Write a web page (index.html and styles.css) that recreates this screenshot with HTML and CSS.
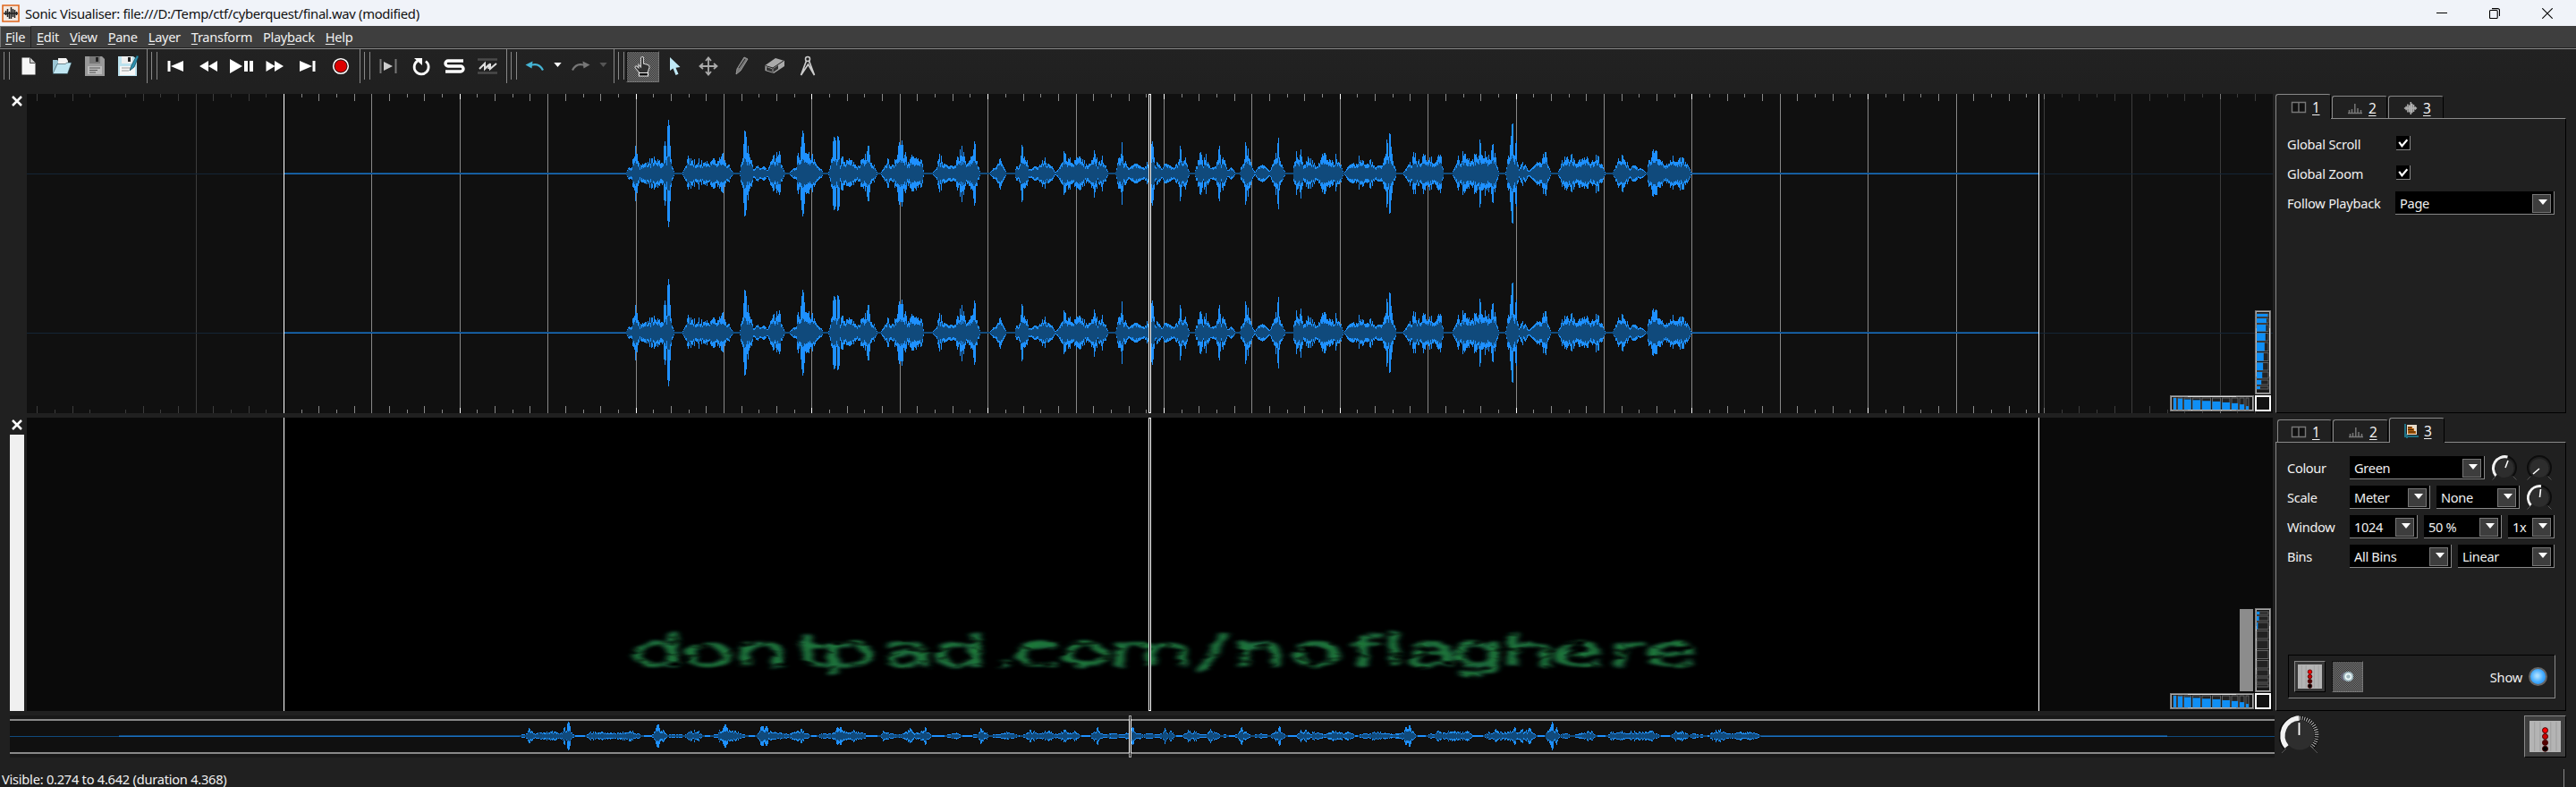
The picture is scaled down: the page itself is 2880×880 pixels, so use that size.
FILE: index.html
```html
<!DOCTYPE html>
<html lang="en">
<head>
<meta charset="utf-8">
<title>Sonic Visualiser</title>
<link rel="stylesheet" href="styles.css">
</head>
<body>
<svg class="defs" width="0" height="0">
  <defs>
    <symbol id="panes" viewBox="0 0 18 14"><path d="M1.5 1.5h15v11h-15zM9 1.5v11" fill="#111" stroke="#777" stroke-width="1.4"/></symbol>
    <symbol id="ruler" viewBox="0 0 18 14"><path d="M1 12.5h16M2.500 12v-3M5.500 12v-4M8.800 12V2M12 12V7M15.500 12V9" stroke="#777" stroke-width="1.5"/></symbol>
    <symbol id="wave" viewBox="0 0 18 16"><path d="M1 8h16M3.500 5.500v5M5.500 3v10M7.500 4v9M9.300 0v16M11 2v12M13 3.500v9M15 6v4" stroke="#b0b0b0" stroke-width="1.700"/></symbol>
    <symbol id="x" viewBox="0 0 12 12"><path d="M1 1l10 10M11 1L1 11" stroke="#fff" stroke-width="2.500"/></symbol>
    <symbol id="fader" viewBox="0 0 28 28"><path d="M0 0h28v28H0z" fill="#b4b4b4"/><path d="M4.500 1v26M9.500 1v26M19 1v26M24 1v26" stroke="#a2a2a2"/><g stroke="#400" stroke-width=".8"><circle cx="14" cy="8.500" r="2.400" fill="#f00"/><circle cx="14" cy="14" r="2.400" fill="#c00"/><circle cx="14" cy="19.500" r="2.400" fill="#500"/><circle cx="14" cy="25" r="2.400" fill="#000"/></g></symbol>
    <symbol id="knob-base" viewBox="0 0 30 30"><path d="M6.200 24.500A13 13 0 1 1 23.800 24.500" fill="none" stroke="#0c0c0c" stroke-width="2"/><circle cx="15" cy="15.500" r="10.500" fill="#2d2d2d"/><path d="M1.500 28.500l4-4M28.500 28.500l-4-4" stroke="#555"/></symbol>
    <filter id="smear" x="-5%" y="-30%" width="110%" height="160%">
      <feTurbulence type="fractalNoise" baseFrequency=".04 .13" numOctaves="2" seed="8" result="n"/>
      <feDisplacementMap in="SourceGraphic" in2="n" scale="10" xChannelSelector="R" yChannelSelector="G" result="d"/>
      <feGaussianBlur in="d" stdDeviation="3.600 1.400" result="b"/>
      <feColorMatrix in="n" type="matrix" values="0 0 0 0 0  0 0 0 0 0  0 0 0 0 0  3 0 0 0 -.5" result="m"/>
      <feComposite in="b" in2="m" operator="in"/>
    </filter>
  </defs>
</svg>

<header class="titlebar">
  <svg class="logo" viewBox="0 0 20 20"><path d="M1 1h18v18H1z" fill="#f2e9e2" stroke="#e0661c" stroke-width="1.600"/><path d="M2 10h16M4.500 7v5M6.500 5v9M8.500 8v8M10.500 3v13M12.500 5v9M14.500 6v9M16.500 8v4" stroke="#222" stroke-width="1.500"/></svg>
  <span class="title">Sonic Visualiser: file:///D:/Temp/ctf/cyberquest/final.wav (modified)</span>
  <div class="winbtns">
    <svg viewBox="0 0 12 12"><path d="M0 5.500h12" stroke="#000"/></svg>
    <svg viewBox="0 0 12 12"><path d="M.5 3.500a1 1 0 0 1 1-1H8a1.200 1.200 0 0 1 1.200 1.200V10.500a1 1 0 0 1-1 1H1.500a1 1 0 0 1-1-1zM3 .6h6.500a2 2 0 0 1 2 2V9" fill="none" stroke="#000" stroke-width="1.100"/></svg>
    <svg viewBox="0 0 12 12"><path d="M.3.3l11.400 11.400M11.700.3L.3 11.700" stroke="#000" stroke-width="1.100"/></svg>
  </div>
</header>

<nav class="menubar">
  <span class="menu open"><u>F</u>ile</span><span class="menu"><u>E</u>dit</span><span class="menu"><u>V</u>iew</span><span class="menu"><u>P</u>ane</span><span class="menu"><u>L</u>ayer</span><span class="menu"><u>T</u>ransform</span><span class="menu"><span>Play</span><u>b</u>ack</span><span class="menu"><u>H</u>elp</span>
</nav>

<div class="toolbars">
  <div class="group g1">
    <i class="tool"><svg viewBox="0 0 24 24"><path d="M4.500 2.500h9l6 6v13h-15z" fill="#f6f6f6"/><path d="M13.500 2.500v6h6" fill="#ccc" stroke="#222" stroke-width=".8"/></svg></i>
    <i class="tool"><svg viewBox="0 0 24 24"><path d="M2 20V5h5l2 2h10v4" fill="#9bc5d4"/><path d="M8 3h9l2 3v6H8z" fill="#f4f4f4"/><path d="M2 20.500l5-11h9l2-1.500h5L18.500 20.500z" fill="#c0e6f2" stroke="#26414a" stroke-width=".6"/></svg></i>
    <i class="tool"><svg viewBox="0 0 24 24"><path d="M1 1h19l3 3v19H1z" fill="#999"/><path d="M6 1h12v8H6z" fill="#777"/><path d="M13 2h3v5h-3z" fill="#222"/><path d="M4 12h16v9H4z" fill="#bbb"/><path d="M6 14h12M6 16.500h9M6 19h7" stroke="#555"/></svg></i>
    <i class="tool"><svg viewBox="0 0 24 24"><path d="M1 1h17l4 3v19H1z" fill="#bce2ee"/><path d="M5 1h12v8H5z" fill="#eee"/><path d="M12 2h3v5h-3z" fill="#222"/><path d="M3 12h17v10H3z" fill="#f7f7f7"/><path d="M5 14h10M5 17h8" stroke="#999"/><path d="M14 17l2-6L22 0l2 1-5 12z" fill="#2b8fae" stroke="#134352" stroke-width=".7"/></svg></i>
  </div>
  <div class="group g2">
    <i class="tool"><svg viewBox="0 0 24 24"><path d="M3.500 6h3v12h-3zM21 6v12L7 12z" fill="#fff"/></svg></i>
    <i class="tool"><svg viewBox="0 0 24 24"><path d="M12 6v12L2 12zM22 6v12l-10-6z" fill="#fff"/></svg></i>
    <i class="tool"><svg class="big" viewBox="0 0 28 24"><path d="M1 4l14 8-14 8zM17 6h4v12h-4zM23 6h4v12h-4z" fill="#fff"/></svg></i>
    <i class="tool"><svg viewBox="0 0 24 24"><path d="M2.500 6l10 6-10 6zM12 6l10 6-10 6z" fill="#fff"/></svg></i>
    <i class="tool"><svg viewBox="0 0 24 24"><path d="M3 6l14 6-14 6zM17.500 6h3v12h-3z" fill="#fff"/></svg></i>
    <i class="tool"><svg viewBox="0 0 24 24"><circle cx="12" cy="12" r="8.200" fill="#d00" stroke="#fff" stroke-width="1.800"/><circle cx="12" cy="12" r="7" fill="none" stroke="#222"/></svg></i>
  </div>
  <div class="group g3">
    <i class="tool"><svg viewBox="0 0 24 24"><path d="M3.500 4v16M20.500 4v16" stroke="#777" stroke-width="2"/><path d="M7 7l10 5-10 5z" fill="#ccc"/></svg></i>
    <i class="tool"><svg viewBox="0 0 24 24"><path d="M17 6.500a8 8 0 1 1-9-.5" fill="none" stroke="#fff" stroke-width="2.800"/><path d="M4 3h9v8z" fill="#fff"/></svg></i>
    <i class="tool"><svg viewBox="0 0 24 24"><path d="M22 6H5a3 3 0 0 0 0 6h14a3 3 0 0 1 0 6H2" fill="none" stroke="#fff" stroke-width="3.400"/></svg></i>
    <i class="tool"><svg viewBox="0 0 24 24"><path d="M1 4.500h22M1 19.500h22" stroke="#4a4a4a" stroke-width="2.500"/><path d="M3 15l6-6v6l5-5M13 15l2-6v6l7-6" fill="none" stroke="#ddd" stroke-width="2"/></svg></i>
  </div>
  <div class="group g4">
    <i class="tool"><svg viewBox="0 0 24 24"><path d="M6 11.500c7-3 12-1 15 5" fill="none" stroke="#45b5d5" stroke-width="2.200"/><path d="M1.500 10.500l8-4-1 8z" fill="#45b5d5"/></svg></i>
    <i class="caret"><svg viewBox="0 0 10 6"><path d="M0 0h10L5 6z" fill="#fff"/></svg></i>
    <i class="tool"><svg viewBox="0 0 24 24"><path d="M18 11.500c-7-3-12-1-15 5" fill="none" stroke="#777" stroke-width="2.200"/><path d="M22.500 10.500l-8-4 1 8z" fill="#777"/></svg></i>
    <i class="caret"><svg viewBox="0 0 10 6"><path d="M0 0h10L5 6z" fill="#555"/></svg></i>
  </div>
  <div class="group g5">
    <i class="tool pressed"><svg viewBox="0 0 24 24"><path d="M10.500 13V2.500q1.500-2 3 0V9l5 1.500q2 1 1.500 3l-2 6H9l-5-6q0-2 2-1.500l2 2V10z" fill="#303030" stroke="#d0d0d0" stroke-width="1.100"/><path d="M8.500 19.500h10V23h-10z" fill="#000" stroke="#eee" stroke-width="1.200"/></svg></i>
    <i class="tool"><svg viewBox="0 0 24 24"><path d="M6 2v15l3.500-2.500 3 7.500 3-1.200-3-7 5-.8z" fill="#bfe8f5"/></svg></i>
    <i class="tool"><svg viewBox="0 0 24 24"><path d="M12 3v18M3 12h18M9 6l3-3.500L15 6M9 18l3 3.500 3-3.500M6 9l-3.500 3L6 15M18 9l3.500 3-3.500 3" fill="none" stroke="#aaa" stroke-width="1.800"/></svg></i>
    <i class="tool"><svg viewBox="0 0 24 24"><path d="M6 21l1-6L15 2l4 2-8 13z" fill="#777" stroke="#aaa" stroke-width=".8"/><path d="M9 14L16 4" stroke="#222"/></svg></i>
    <i class="tool"><svg viewBox="0 0 24 24"><path d="M1.500 11L13 3l10 3v6l-12 8-9.500-3z" fill="#aaa"/><path d="M2 11.500l8 2.500 12-8M10 14v5.500" stroke="#222" fill="none"/><path d="M3 13l6 2v3.500l-6-2zM11 14.500l5-3.500v4l-5 3.500z" fill="#333"/></svg></i>
    <i class="tool"><svg viewBox="0 0 24 24"><circle cx="12" cy="4" r="2.500" fill="none" stroke="#ccc" stroke-width="1.500"/><path d="M10.500 6L4.500 22 12.500 10l7 12L13.500 6" fill="none" stroke="#ccc" stroke-width="1.700"/></svg></i>
  </div>
</div>

<main class="workspace">
  <section class="canvas-col">
    <div class="pane-row row1">
      <div class="gutter"><svg class="close"><use href="#x"/></svg></div>
      <div class="pane wavepane">
        <svg id="wavePane" viewBox="30 105 2511 357" shape-rendering="crispEdges"></svg>
        <svg class="wheel vert" data-levels=".95 .85 .8 .75 .68 .6 .55 .48 .4 .3 .2"></svg>
        <svg class="wheel horz"></svg>
        <div class="reset"></div>
      </div>
    </div>
    <div class="pane-row row2">
      <div class="gutter"><svg class="close"><use href="#x"/></svg><div class="scale"></div></div>
      <div class="pane specpane">
        <svg id="specPane" viewBox="30 467 2511 328">
          <path d="M317 467h1962v328H317z" fill="#000"/>
          <g filter="url(#smear)"><text id="spectral" class="spectral" transform="scale(2.050 1)" y="745">dontpad.com/noflaghere</text></g>
          <g shape-rendering="crispEdges"><path d="M317.500 467v328M2279.500 467v328" stroke="#fff"/><path d="M1284.500 467.500h2v327h-2z" fill="#000" stroke="#fff"/></g>
        </svg>
        <div class="gain"></div>
        <svg class="wheel vert" data-levels=".25 .2 .1 0 0 0 0 0 0 0 0"></svg>
        <svg class="wheel horz"></svg>
        <div class="reset"></div>
      </div>
    </div>
    <div class="overview"><svg id="overview" viewBox="11 800 2532 47" shape-rendering="crispEdges"></svg></div>
  </section>

  <aside class="side">
    <div class="tabset first">
      <div class="tabs">
        <div class="tab active"><svg class="ti"><use href="#panes"/></svg><u>1</u></div>
        <div class="tab"><svg class="ti"><use href="#ruler"/></svg><u>2</u></div>
        <div class="tab"><svg class="ti tall"><use href="#wave"/></svg><u>3</u></div>
      </div>
      <div class="body">
        <div class="row"><label class="wide">Global Scroll</label><span class="check"><svg viewBox="0 0 14 14"><path d="M3 6.500l3 4 5.500-6.500" fill="none" stroke="#fff" stroke-width="2"/></svg></span></div>
        <div class="row"><label class="wide">Global Zoom</label><span class="check"><svg viewBox="0 0 14 14"><path d="M3 6.500l3 4 5.500-6.500" fill="none" stroke="#fff" stroke-width="2"/></svg></span></div>
        <div class="row"><label class="wide">Follow Playback</label><span class="select s178">Page</span></div>
      </div>
    </div>
    <div class="tabset second">
      <div class="tabs">
        <div class="tab"><svg class="ti"><use href="#panes"/></svg><u>1</u></div>
        <div class="tab"><svg class="ti"><use href="#ruler"/></svg><u>2</u></div>
        <div class="tab active"><svg class="ti tall" viewBox="0 0 16 16"><path d="M1 0v14h15M3 11v5" stroke="#1f7083" stroke-width="2" fill="none"/><path d="M3 1h11v11H3z" fill="#e8dccb"/><path d="M4 3h5v2h2v3h2v3H4z" fill="#b5620f"/><path d="M4 4h4M4 6.500h6M5 9h7" stroke="#402000"/></svg><u>3</u></div>
      </div>
      <div class="body">
        <div class="row"><label>Colour</label><span class="select s151">Green</span>
          <svg class="knob k1" viewBox="0 0 30 30"><use href="#knob-base"/><path d="M5.500 24A13 13 0 0 1 18.500 3" fill="none" stroke="#f2f2f2" stroke-width="3"/><path d="M16 15l3-8" stroke="#fff" stroke-width="1.600"/></svg>
          <svg class="knob k2" viewBox="0 0 30 30"><use href="#knob-base"/><path d="M8 22l7-6" stroke="#fff" stroke-width="1.600"/></svg></div>
        <div class="row"><label>Scale</label><span class="select s90">Meter</span><span class="select s93">None</span>
          <svg class="knob k1" viewBox="0 0 30 30"><use href="#knob-base"/><path d="M5.500 24A13 13 0 0 1 17 2.700" fill="none" stroke="#f2f2f2" stroke-width="3"/><path d="M15.500 15l1-9" stroke="#fff" stroke-width="1.600"/></svg></div>
        <div class="row"><label>Window</label><span class="select s76">1024</span><span class="select s87">50 %</span><span class="select s52">1x</span></div>
        <div class="row"><label>Bins</label><span class="select s114">All Bins</span><span class="select s108">Linear</span></div>
        <div class="playbox">
          <span class="pbtn"><svg><use href="#fader"/></svg></span>
          <span class="pbtn textured"><svg viewBox="0 0 28 28"><circle cx="11" cy="14" r="5" fill="#667"/><circle cx="15" cy="14" r="6" fill="#9fb6bd"/><circle cx="15" cy="14" r="3.200" fill="none" stroke="#f4ffff" stroke-width="1.500"/></svg></span>
          <span class="show">Show</span><span class="led"></span>
        </div>
      </div>
    </div>
    <div class="master">
      <svg class="dial" viewBox="0 0 46 46"><path d="M7 37A20 20 0 1 1 37 37" fill="none" stroke="#0a0a0a" stroke-width="5"/><path d="M23 4A19 19 0 0 1 36.500 36.500" fill="none" stroke="#bbb" stroke-width="4.500" stroke-dasharray="1 1.600"/><circle cx="23" cy="23" r="16.500" fill="#2e2e2e"/><path d="M8.500 36A19.500 19.500 0 0 1 22.500 4" fill="none" stroke="#f2f2f2" stroke-width="5.500"/><path d="M22.500 9v14" stroke="#fff" stroke-width="1.800"/><path d="M3 43l5-5M43 43l-5-5" stroke="#555"/></svg>
      <span class="mixer"><svg><use href="#fader"/></svg></span>
    </div>
  </aside>
</main>
<footer class="status"><span>Visible: 0.274 to 4.642 (duration 4.368)</span><i></i></footer>
<script src="app.js"></script>
</body>
</html>
```

FILE: styles.css
```css
* { box-sizing: border-box; }
body {
  margin: 0; width: 2880px; height: 880px; overflow: hidden;
  background: #202020; color: #f0f0f0;
  font: 14.6px/20px "Noto Sans", "Open Sans", sans-serif; letter-spacing: -.32px;
  display: flex; flex-direction: column;
}
svg { display: block; }
.defs { position: absolute; }
u { text-underline-offset: 2px; text-decoration-thickness: 1px; }

.titlebar { height: 29px; flex: none; background: #f0f3f9; color: #111; display: flex; align-items: center; padding: 0 26px 0 2px; }
.logo { width: 20px; height: 20px; margin-right: 6px; }
.title { flex: 1; font-size: 14.8px; letter-spacing: -.32px; }
.winbtns { display: flex; gap: 47px; }
.winbtns svg { width: 12px; height: 12px; }

.menubar { height: 24px; flex: none; background: #3e3e3e; display: flex; letter-spacing: -.3px; }
.menu { padding: 3px 6px 0; line-height: 19px; height: 24px; }
.menu.open { width: 35px; border-right: 1px solid #222; border-top: 1px solid #777; border-left: 1px solid #777; padding: 2px 5px 0; }

.toolbars { height: 41px; flex: none; display: flex; padding-top: 1px; background: linear-gradient(#222, #202020); }
.group { display: flex; align-items: center; height: 39px; border-top: 1px solid #888; border-left: 1px solid #888; padding-left: 12.5px; position: relative; }
.group::before { content: ""; position: absolute; left: 4px; top: 3px; width: 5px; height: 31px; border: solid #888; border-width: 0 1px; }
.g1 { width: 164px; border-left: 0; padding-left: 13.5px; }
.g2 { width: 238px; } .g3 { width: 164px; } .g4 { width: 120px; } .g5 { flex: 1; }
.tool { width: 37px; height: 35px; flex: none; display: flex; align-items: center; justify-content: center; }
.tool svg { width: 24px; height: 24px; }
.tool svg.big { width: 28px; }
.caret { width: 14px; display: flex; justify-content: center; }
.caret svg { width: 9px; height: 5px; margin-bottom: 3px; }
.pressed, .textured { background: repeating-conic-gradient(#7a7a7a 0 25%, #333 0 50%) 0 0 / 2px 2px; border: 1px solid #111; border-right-color: #777; border-bottom-color: #777; }

.workspace { display: flex; height: 753px; flex: none; padding-top: 11px; }
.canvas-col { width: 2544px; flex: none; }
.pane-row { display: flex; }
.row1 { height: 362px; } .row2 { height: 333px; }
.gutter { width: 30px; padding: 2px 0 0 13px; }
.close { width: 12px; height: 12px; }
.scale { width: 16px; height: 309px; margin: 5px 0 0 -2px; background: #f0f0f0; }
.pane { position: relative; width: 2511px; }
.wavepane { height: 357px; background: #101010; }
.specpane { height: 328px; background: #0a0a0a; }
.pane > svg:first-child { width: 100%; height: 100%; }
.spectral { font: 48px "DejaVu Sans", sans-serif; letter-spacing: 0; fill: #1f7a38; stroke: #1d6642; stroke-width: 1.4; }
.wheel { position: absolute; }
.wheel.vert { right: 2px; bottom: 21px; width: 18px; height: 94px; }
.wheel.horz { right: 21px; bottom: 2px; width: 94px; height: 18px; }
.reset { position: absolute; right: 2px; bottom: 2px; width: 18px; height: 18px; border: 2px solid #fff; background: #111; }
.gain { position: absolute; right: 22px; bottom: 22px; width: 15px; height: 92px; background: #8c8c8c; }
.overview { margin-left: 11px; height: 47px; width: 2532px; background: #181818; }
.overview svg { width: 100%; height: 100%; }

.side { width: 325px; }
.tabset { display: flex; flex-direction: column; }
.first { height: 357px; margin-bottom: 5px; }
.second { height: 328px; }
.tabs { display: flex; height: 27px; align-items: flex-end; }
.tab { width: 62px; height: 25px; margin-right: 1px; border: 1px solid #888; border-right-color: #000; border-bottom: 0; border-radius: 3px 3px 0 0; display: flex; align-items: center; gap: 6px; padding: 2px 0 0 14px; background: #202020; font-size: 15.5px; }
.tab.active { height: 28px; margin-bottom: -1px; z-index: 1; padding-top: 1px; padding-bottom: 1px; position: relative; }
.first .tab.active { padding-left: 16px; }
.second .tab:first-child { margin-left: 2px; width: 61px; }
.tab:nth-child(2) { padding-left: 16px; }
.tab:last-child { padding-left: 16px; }
.ti { width: 18px; height: 14px; }
.ti.tall { width: 16px; height: 16px; }
.body { flex: 1; border: 1px solid #888; border-right-color: #000; border-bottom-color: #000; padding: 15px 11px 0 12px; display: flex; flex-direction: column; gap: 7px; }
.row { display: flex; height: 26px; align-items: center; gap: 7px; }
.row label { width: 63px; white-space: nowrap; }
.row label.wide { width: 114px; letter-spacing: -.22px; }
.check { width: 16px; height: 16px; background: #000; border: solid #888; border-width: 0 1px 1px 0; margin: -2px 0 0 1px; }
.check svg { width: 15px; height: 15px; }
.select { height: 26px; flex: none; background: #000; border: solid #888; border-width: 0 1px 1px 0; padding: 3px 0 0 5px; position: relative; white-space: nowrap; }
.select::before { content: ""; position: absolute; right: 3px; top: 3px; width: 19px; height: 19px; background: #3d3d3d; border: 1px solid #777; }
.select::after { content: ""; position: absolute; right: 7px; top: 9px; border: solid transparent; border-width: 6px 5.5px 0; border-top-color: #fff; }
.s178 { width: 178px; } .s151 { width: 151px; } .s90 { width: 90px; } .s93 { width: 93px; } .s76 { width: 76px; }
.s87 { width: 87px; } .s52 { width: 52px; } .s114 { width: 114px; } .s108 { width: 108px; }
.knob { width: 30px; height: 30px; flex: none; margin: -2px 0; }
.k2 { margin-left: 2px; }
.playbox { height: 49px; margin: 90px 0 0 1px; border: 1px solid #000; border-right-color: #888; border-bottom-color: #888; display: flex; align-items: center; padding: 0 8px 0 6px; }
.pbtn { width: 35px; height: 35px; border: 1px solid #888; border-right-color: #000; border-bottom-color: #000; display: flex; align-items: center; justify-content: center; margin-right: 7px; background-color: #383838; }
.pbtn svg { width: 27px; height: 27px; }
.pbtn.textured { border-color: #111 #777 #777 #111; }
.show { margin-left: auto; letter-spacing: -.2px; }
.led { width: 21px; height: 21px; border-radius: 50%; margin-left: 7px; border: 2px solid #666; background: radial-gradient(circle at 45% 45%, #a8ddff 10%, #3fa9ff 55%, #1a7fe0); }
.master { display: flex; justify-content: space-between; padding-top: 5px; }
.dial { width: 46px; height: 46px; margin-left: 4px; margin-top: -1px; }
.mixer { width: 47px; height: 47px; background: #3e3e3e; border: 1px solid #888; border-right-color: #000; border-bottom-color: #000; padding: 5px; }
.mixer svg { width: 35px; height: 35px; }
.status { height: 20px; display: flex; justify-content: space-between; padding-left: 2px; line-height: 23px; margin-top: auto; letter-spacing: -.23px; }
.status i { width: 1px; height: 20px; background: #888; margin-right: 13px; }
```

FILE: app.js
```js
// Peak envelope: position:level pairs along the recording, mirrored about the axis.
const ENVELOPE = `48:3 55:20 64:15 68:55 73:95 80:50 86:15 88:40 100:42 115:50 125:58 135:58 140:40 146:50 150:25 153:95 155:110 158:60 161:90 163:183 166:160 169:70 173:25 180:3
203:3 212:25 218:58 224:48 232:48 240:45 247:52 255:42 265:40 280:42 290:52 297:45 304:50 312:68 318:45 323:20 328:42 333:15 342:3
360:3 366:50 371:100 373:143 376:140 378:75 382:90 386:70 392:40 397:8 404:22 409:26 415:14 424:24 430:20 435:8 443:30 449:65 453:65 456:22 461:80 464:60 468:88 472:35 478:15 484:3
496:3 508:18 515:18 519:75 524:55 528:95 532:150 536:100 540:80 546:75 553:70 557:70 563:50 570:28 576:18 582:15 587:3
603:3 609:30 613:75 617:123 621:120 625:60 628:125 631:120 634:30 640:62 647:48 655:45 665:48 673:35 681:18 690:45 697:58 703:68 708:60 711:95 715:85 718:40 725:38 730:15 735:3
747:3 757:25 764:50 770:35 776:35 782:25 786:55 790:45 796:108 800:80 804:114 808:60 813:80 818:45 825:40 830:60 836:85 841:55 848:55 855:45 860:45 862:3
888:3 895:12 900:20 904:65 911:58 916:35 925:30 932:20 938:28 945:22 950:30 956:55 961:70 966:90 971:80 976:40 983:50 990:40 997:75 1001:75 1003:111 1006:60 1011:35 1017:3
1046:3 1055:18 1062:20 1072:50 1080:25 1089:3
1113:3 1118:25 1124:15 1128:50 1132:98 1136:80 1141:50 1146:45 1150:15 1160:14 1168:25 1175:18 1182:30 1189:45 1194:55 1200:35 1208:30 1215:22 1222:4 1230:10 1240:30 1248:82 1253:50 1260:65 1266:40 1272:45 1278:40 1285:62 1292:60 1298:50 1305:40 1312:20 1320:45 1328:82 1334:72 1340:35 1346:40 1352:60 1358:45 1364:15 1368:3
1389:3 1393:20 1397:75 1401:40 1404:75 1407:107 1410:50 1415:45 1420:25 1425:15 1430:24 1445:34 1460:22 1470:18 1474:42 1479:20 1483:60 1486:90 1490:110 1494:50 1498:28 1504:45 1510:25 1516:12 1524:34 1535:28 1550:16 1555:32 1560:22 1563:60 1565:98 1569:60 1572:20 1579:75 1582:50 1586:18 1592:3
1606:3 1612:30 1620:68 1624:65 1629:28 1636:70 1641:40 1648:18 1660:22 1665:25 1668:50 1673:96 1677:30 1683:62 1689:40 1694:12 1700:12 1705:20 1710:14 1717:3
1730:3 1732:18 1738:30 1742:70 1745:108 1749:55 1752:83 1756:50 1762:22 1770:3 1775:12 1782:24 1791:29 1802:20 1812:4 1820:35 1826:60 1831:75 1835:120 1838:65 1843:40 1848:15 1854:3
1875:3 1879:40 1884:75 1890:62 1897:80 1902:45 1908:20 1914:58 1920:50 1928:45 1938:20 1944:25 1950:55 1955:65 1960:72 1966:62 1973:48 1976:65 1982:48 1988:28 1993:65 1998:38 2003:45 2008:20 2012:3
2018:5 2026:24 2036:32 2044:35 2050:30 2055:60 2062:48 2070:48 2077:45 2085:48 2092:40 2100:18 2108:28 2120:28 2125:65 2128:50 2132:120 2136:60 2140:141 2143:90 2147:60 2151:30 2158:3
2178:4 2186:18 2194:38 2200:30 2205:68 2210:70 2215:35 2222:50 2227:38 2232:70 2238:60 2243:65 2250:50 2255:60 2262:50 2267:52 2272:55 2277:78 2282:45 2287:3
2312:3 2318:20 2325:35 2328:70 2332:25 2338:60 2343:85 2348:55 2355:60 2362:48 2370:58 2377:70 2382:45 2387:114 2391:60 2396:50 2400:55 2404:90 2409:65 2413:70 2417:55 2422:102 2426:75 2431:40 2436:12 2440:3
2458:3 2461:40 2466:72 2471:100 2476:174 2479:50 2483:80 2486:111 2489:40 2494:10 2500:30 2506:40 2512:28 2520:5 2528:16 2538:28 2548:42 2555:40 2560:70 2565:65 2568:86 2571:30 2576:20 2581:3
2600:3 2608:20 2613:55 2619:60 2625:65 2631:48 2637:62 2643:50 2650:25 2659:60 2665:35 2669:65 2674:40 2678:60 2685:50 2692:50 2699:52 2705:70 2710:75 2715:20 2720:35 2725:15 2730:3
2750:3 2758:18 2765:60 2770:40 2775:50 2779:72 2783:38 2789:40 2797:10 2805:28 2811:28 2820:15 2827:18 2834:12 2840:3
2845:5 2850:50 2855:45 2861:90 2865:60 2870:85 2875:55 2882:50 2888:40 2896:35 2902:25 2910:55 2916:68 2921:35 2928:40 2936:60 2942:55 2950:38 2958:25 2965:3`
  .trim().split(/\s+/).map(p => p.split(':').map(Number));

const levelAt = v => {
  if (v <= ENVELOPE[0][0] || v >= ENVELOPE[ENVELOPE.length - 1][0]) return 1.5;
  let i = 1;
  while (ENVELOPE[i][0] < v) i++;
  const [a, b] = [ENVELOPE[i - 1], ENVELOPE[i]];
  return a[1] + (b[1] - a[1]) * (v - a[0]) / (b[0] - a[0]);
};
const noise = n => { const s = Math.sin(n * 127.1 + 3.7) * 43758.5453; return s - Math.floor(s); };

// One vertical bar for each pixel column: bright peaks over a dark mean body.
function waveform(from, to, toLevel, centre, gain) {
  let peak = '', mean = '';
  for (let x = from; x < to; x++) {
    const v = toLevel(x);
    const near = Math.max(levelAt(v - .8), levelAt(v), levelAt(v + .8));
    const rough = near > 34 && near < 90;
    const h = near / 3 * gain * (rough ? .6 + .48 * noise(x) : 1);
    const up = Math.max(1, Math.round(h)), down = Math.max(1, Math.round(h * (rough ? .9 + .15 * noise(x + 9) : 1)));
    peak += `M${x + .5} ${centre - up}V${centre + down}`;
    const m = Math.max(near > 6 ? 1 : 0, Math.round(Math.min(h * .68, (7 + h * .2) * (gain < 1 ? .6 : 1)) * (.8 + .35 * noise(x + 40))));
    if (m) mean += `M${x + .5} ${centre - m}V${centre + m}`;
  }
  return `<path d="${peak}" stroke="#1e90ff"/><path d="${mean}" stroke="#104a7c"/>`;
}
const line = (x, y1, y2, c, w = 1) => `<rect x="${x}" y="${y1}" width="${w}" height="${y2 - y1}" fill="${c}"/>`;
const hline = (x1, x2, y, c, h = 1) => `<rect x="${x1}" y="${y}" width="${x2 - x1}" height="${h}" fill="${c}"/>`;

function drawWavePane() {
  const top = 105, bottom = 462;
  let s = '';
  for (let i = -14; i < 113; i++) {
    const x = Math.floor(317.45 + i * 19.68), k = ((i % 10) + 10) % 10;
    if (i === -10) continue;
    const outside = x < 317 || x > 2279, c = outside ? '#3c3c3c' : '#888';
    if (k === 0 || k === 5) {
      s += line(x, top, bottom, c);
      if (k === 0) s += line(x, top, top + 6, outside ? '#777' : '#fff') + line(x, bottom - 6, bottom, outside ? '#777' : '#fff');
    } else {
      const len = k % 2 ? 4 : 8;
      s += line(x, top, top + len, c) + line(x, bottom - len, bottom, c);
    }
  }
  for (const y of [194, 372]) {
    s += hline(30, 317, y, '#142536') + hline(2280, 2541, y, '#142536');
    s += hline(317, 2280, y - 1, '#104a7c') + hline(317, 2280, y, '#1b6fc0');
    s += waveform(700, 1891, x => (x - 680) * 2.45, y, 1);
  }
  s += line(317, top, bottom, '#fff') + line(2279, top, bottom, '#fff');
  s += '<path d="M1284.500 105.500h2v356h-2z" fill="#101010" stroke="#fff"/>';
  document.getElementById('wavePane').innerHTML = s;
}

function drawOverview() {
  let s = '<rect x="11" y="806" width="2532" height="36" fill="#101010"/>';
  s += hline(11, 2543, 804, '#888', 2) + hline(11, 2543, 841, '#888', 2);
  s += hline(11, 2543, 823, '#104a7c') + hline(133, 2423, 822, '#104a7c') + hline(133, 2423, 823, '#1b6fc0');
  s += waveform(581, 1969, x => (897.1 + (x - 810.2) / 1.166 - 680) * 2.45, 823, .27);
  s += '<path d="M1262.500 800.500h2v46h-2z" fill="#181818" stroke="#aaa"/>' + line(1262, 804, 842, '#fff') + line(1264, 804, 842, '#fff');
  document.getElementById('overview').innerHTML = s;
}

function drawWheels() {
  const steps = [4, 9, 16, 25.5, 36, 47.500, 58.500, 69, 78, 85, 90];
  const levels = [1, .95, .88, .82, .75, .7, .62, .55, .45, .3];
  document.querySelectorAll('.wheel').forEach(w => {
    const vert = w.classList.contains('vert');
    const lv = vert ? w.dataset.levels.split(' ').map(Number) : levels;
    let s = '<rect x=".5" y=".5" width="93" height="17" fill="#181818" stroke="#777"/><rect x="1.500" y="1.500" width="91" height="15" fill="none" stroke="#aaa"/><path d="M20 1.500h54M20 16.500h54" stroke="#ddd"/>';
    for (let i = 0; i < steps.length - 1; i++) {
      const a = steps[i], b = steps[i + 1] - 2, h = 13 * lv[i];
      s += `<rect x="${a}" y="3" width="${b - a}" height="13" fill="#222" stroke="#6a6a6a" stroke-width=".9"/>`;
      s += `<rect x="${a}" y="${16 - h}" width="${b - a}" height="${h}" fill="#0f8ff5"/>`;
    }
    w.innerHTML = vert ? `<g transform="matrix(0 1 -1 0 18 0)">${s}</g>` : s;
  });
}

// Left edge of every spectrogram glyph, in pane pixels.
const GLYPHS = [703, 762, 820, 890, 918, 985, 1042, 1106, 1132, 1184, 1239, 1340, 1377, 1442, 1509, 1545, 1571, 1621, 1678, 1734, 1798, 1838];
document.getElementById('spectral').setAttribute('x', GLYPHS.map(x => (x / 2.05).toFixed(1)).join(' '));
drawWavePane();
drawOverview();
drawWheels();
```
